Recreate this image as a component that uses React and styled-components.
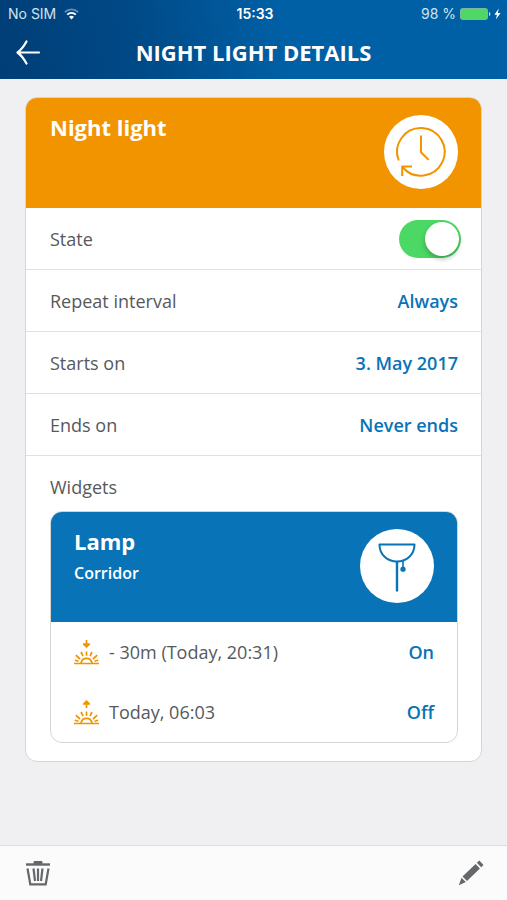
import React, { useState } from "react";
import styled, { createGlobalStyle } from "styled-components";

const ORANGE = "#f29400";
const BLUE = "#0873b7";
const GREY = "#56595c";
const LINE = "#d4d5d8";

const GlobalStyle = createGlobalStyle`
  *, *::before, *::after { box-sizing: border-box; }
  body { margin: 0; background: #f0f0f3; font-family: "Open Sans", sans-serif; color: ${GREY}; }
  button { font: inherit; }
`;

const Screen = styled.div`
  min-height: 100vh;
  display: flex;
  flex-direction: column;
`;

const Header = styled.header`
  background: linear-gradient(80deg, #003e76 0%, #004a88 28%, #0060a5 56%, #0060a5 100%);
  color: #fff;
`;

const StatusBar = styled.div`
  height: 28px;
  padding: 0 5px 0 8px;
  display: grid;
  grid-template-columns: 1fr auto 1fr;
  align-items: center;
  font-family: Inter, sans-serif;
  font-size: 14px;
  line-height: 20px;
`;

const StatusGroup = styled.div`
  display: flex;
  align-items: center;
  gap: ${(p) => (p.$end ? 4 : 8)}px;
  justify-content: ${(p) => (p.$end ? "flex-end" : "flex-start")};
  color: #d3e2f0;
`;

const Time = styled.time`
  font-weight: 600;
`;

const TitleBar = styled.div`
  height: 51px;
  padding: 0 10px 3px;
  display: grid;
  grid-template-columns: 36px 1fr 36px;
  align-items: center;
`;

const Title = styled.h1`
  margin: 0;
  font-size: 22px;
  line-height: 28px;
  font-weight: 700;
  text-align: center;
  white-space: nowrap;
`;

const IconButton = styled.button`
  width: 36px;
  height: 36px;
  padding: 0;
  border: 0;
  background: none;
  color: inherit;
  display: grid;
  place-items: center;
  cursor: pointer;
`;

const Content = styled.main`
  flex: 1;
  padding: 18px 25px;
`;

const Card = styled.section`
  background: #fff;
  border: 1px solid ${LINE};
  border-radius: 12px;
  overflow: hidden;
`;

const Banner = styled.div`
  height: 110px;
  padding: 14px 23px 0 ${(p) => (p.$nested ? 23 : 24)}px;
  background: ${(p) => p.$color};
  color: ${(p) => p.$color};
  display: flex;
  justify-content: space-between;
`;

const Heading = styled.h2`
  margin: 0;
  color: #fff;
  font-size: 22px;
  line-height: 30px;
  font-weight: 700;
`;

const Subheading = styled.p`
  margin: 6px 0 0;
  color: #fff;
  font-size: 16px;
  line-height: 22px;
  font-weight: 600;
`;

const Disc = styled.div`
  width: 74px;
  height: 74px;
  margin-top: 3px;
  border-radius: 50%;
  background: #fff;
`;

const Row = styled.div`
  height: ${(p) => (p.$nested ? 60 : 62)}px;
  padding: 0 23px 0 ${(p) => (p.$nested ? 23 : 24)}px;
  border-bottom: ${(p) => (p.$nested ? "0" : "1px solid #dfe0e2")};
  display: flex;
  align-items: center;
  justify-content: space-between;
  font-size: 18px;
  line-height: 26px;
`;

const RowLabel = styled.span`
  display: flex;
  align-items: center;
  gap: 10px;
`;

const Value = styled.span`
  color: ${BLUE};
  font-weight: 600;
`;

const Switch = styled.input`
  appearance: none;
  width: 62px;
  height: 38px;
  margin: 0 -3px 0 0;
  padding: 2px;
  border-radius: 19px;
  background: ${(p) => (p.checked ? "#4bd864" : "#d5d5d8")};
  display: flex;
  justify-content: ${(p) => (p.checked ? "flex-end" : "flex-start")};
  cursor: pointer;

  &::before {
    content: "";
    width: 34px;
    height: 34px;
    border-radius: 50%;
    background: #fff;
    box-shadow: 0 3px 5px rgba(0, 0, 0, 0.25);
  }
`;

const Widgets = styled.div`
  padding: 18px 23px 18px 24px;
`;

const WidgetsTitle = styled.h3`
  margin: 0 0 11px;
  font-size: 18px;
  line-height: 26px;
  font-weight: 400;
`;

const Toolbar = styled.footer`
  height: 55px;
  padding: 0 18px 0 20px;
  border-top: 1px solid #dcdcdf;
  background: #fbfbfc;
  color: #64686b;
  display: flex;
  align-items: center;
  justify-content: space-between;
`;

const WifiIcon = () => (
  <svg width="15" height="12" viewBox="0 0 15 12" fill="none" strokeWidth="1.8" aria-hidden="true">
    <path d="M0.8 4.2C4.6 0.4 10.4 0.4 14.2 4.2" stroke="#5f8fba" />
    <path d="M3.2 6.7C5.6 4.3 9.4 4.3 11.8 6.7" stroke="#fff" />
    <path d="M7.5 11.4L5 8.8C6.4 7.5 8.6 7.5 10 8.8Z" fill="#fff" />
  </svg>
);

const BatteryIcon = () => (
  <svg width="42" height="14" viewBox="0 0 42 14" aria-hidden="true">
    <rect x="0.5" y="1.5" width="27" height="11" rx="2" fill="#4fd964" stroke="#79b7a4" />
    <path d="M29 5C30.8 5.5 30.8 8.5 29 9Z" fill="#d3e2f0" />
    <path d="M38.8 1.5L34.4 7.8H37L35.8 12.6L40.6 6H37.8Z" fill="#fff" />
  </svg>
);

const BackIcon = () => (
  <svg width="26" height="26" viewBox="0 0 26 26" fill="none" stroke="currentColor" strokeWidth="2.2" strokeLinecap="round" strokeLinejoin="round" aria-hidden="true">
    <path d="M24 13.500H2.500M11.500 2.500C9 7 6 11 2.500 13.500C6 16 9 20 11.500 24.500" />
  </svg>
);

const ClockIcon = () => (
  <svg width="74" height="74" viewBox="0 0 74 74" fill="none" stroke="currentColor" strokeWidth="2" strokeLinejoin="round" aria-hidden="true">
    <path d="M14.700 45.500A23.800 23.800 0 1 1 18.500 52" />
    <path d="M18.200 61V51.500H28M37 20.500V37.300L44.600 44.900" />
  </svg>
);

const LampIcon = () => (
  <svg width="74" height="74" viewBox="0 0 74 74" fill="none" stroke="currentColor" strokeWidth="2" strokeLinejoin="round" aria-hidden="true">
    <path d="M19.500 15.500H54.500C54.500 25.500 46.800 32.500 37 32.500S19.500 25.500 19.500 15.500Z" />
    <path d="M37 32.500V62.500" strokeWidth="2.400" />
    <path d="M43 31.500V40" strokeWidth="1.600" />
    <circle cx="43" cy="40.200" r="2.600" fill="currentColor" stroke="none" />
  </svg>
);

const SunIcon = ({ down }) => (
  <svg width="25" height="25" viewBox="0 0 25 25" fill="none" stroke={ORANGE} strokeWidth="1.700" strokeLinejoin="round" aria-hidden="true">
    <path d="M0 23.500H25M7 23C7.600 20.200 9.800 18.400 12.500 18.400S17.400 20.200 18 23" />
    <path d="M12.500 11.500V15.800M7 12L9 16M18 12L16 16M1.800 15.200L6 19M23.200 15.200L19 19M0.800 20.300L4.500 21.300M24.200 20.300L20.500 21.300" />
    {down ? (
      <path d="M12.500 0V6.800M9.600 4.200L12.500 7L15.400 4.200Z" />
    ) : (
      <path d="M12.500 8V1.200M9.600 4L12.500 1.200L15.400 4Z" />
    )}
  </svg>
);

const TrashIcon = () => (
  <svg width="26" height="26" viewBox="0 0 26 26" fill="none" stroke="currentColor" strokeWidth="2.400" aria-hidden="true">
    <path d="M1 4.500H25" />
    <path d="M9 3.500V1.500H17V3.500Z" fill="currentColor" strokeWidth="1" />
    <path d="M2.500 8.500L5.300 24.300H20.700L23.500 8.500M8.500 8.500L10 21M17.500 8.500L16 21M13 8.500V21" strokeWidth="2.200" />
  </svg>
);

const PencilIcon = () => (
  <svg width="26" height="26" viewBox="0 0 26 26" fill="currentColor" aria-hidden="true">
    <path d="M18.900 2.800L21.300 0.500L25.500 4.900L23.100 7.200Z" />
    <path d="M17.600 4L21.900 8.400L9 21L4.500 16.500Z" />
    <path d="M3.500 17.700L7.800 22L0.800 25.200Z" />
  </svg>
);

const details = [
  ["Repeat interval", "Always"],
  ["Starts on", "3. May 2017"],
  ["Ends on", "Never ends"],
];

const actions = [
  { label: "- 30m (Today, 20:31)", value: "On", down: true },
  { label: "Today, 06:03", value: "Off", down: false },
];

export default function App() {
  const [enabled, setEnabled] = useState(true);
  return (
    <Screen>
      <GlobalStyle />
      <Header>
        <StatusBar>
          <StatusGroup>
            <span>No SIM</span>
            <WifiIcon />
          </StatusGroup>
          <Time>15:33</Time>
          <StatusGroup $end>
            <span>98 %</span>
            <BatteryIcon />
          </StatusGroup>
        </StatusBar>
        <TitleBar>
          <IconButton type="button" aria-label="Back">
            <BackIcon />
          </IconButton>
          <Title>NIGHT LIGHT DETAILS</Title>
        </TitleBar>
      </Header>
      <Content>
        <Card>
          <Banner $color={ORANGE}>
            <Heading>Night light</Heading>
            <Disc>
              <ClockIcon />
            </Disc>
          </Banner>
          <Row>
            <label htmlFor="state">State</label>
            <Switch
              id="state"
              type="checkbox"
              role="switch"
              checked={enabled}
              onChange={(e) => setEnabled(e.target.checked)}
            />
          </Row>
          {details.map(([label, value]) => (
            <Row key={label}>
              <RowLabel>{label}</RowLabel>
              <Value>{value}</Value>
            </Row>
          ))}
          <Widgets>
            <WidgetsTitle>Widgets</WidgetsTitle>
            <Card>
              <Banner $color={BLUE} $nested>
                <div>
                  <Heading>Lamp</Heading>
                  <Subheading>Corridor</Subheading>
                </div>
                <Disc>
                  <LampIcon />
                </Disc>
              </Banner>
              {actions.map(({ label, value, down }) => (
                <Row key={label} $nested>
                  <RowLabel>
                    <SunIcon down={down} />
                    {label}
                  </RowLabel>
                  <Value>{value}</Value>
                </Row>
              ))}
            </Card>
          </Widgets>
        </Card>
      </Content>
      <Toolbar>
        <IconButton type="button" aria-label="Delete">
          <TrashIcon />
        </IconButton>
        <IconButton type="button" aria-label="Edit">
          <PencilIcon />
        </IconButton>
      </Toolbar>
    </Screen>
  );
}
